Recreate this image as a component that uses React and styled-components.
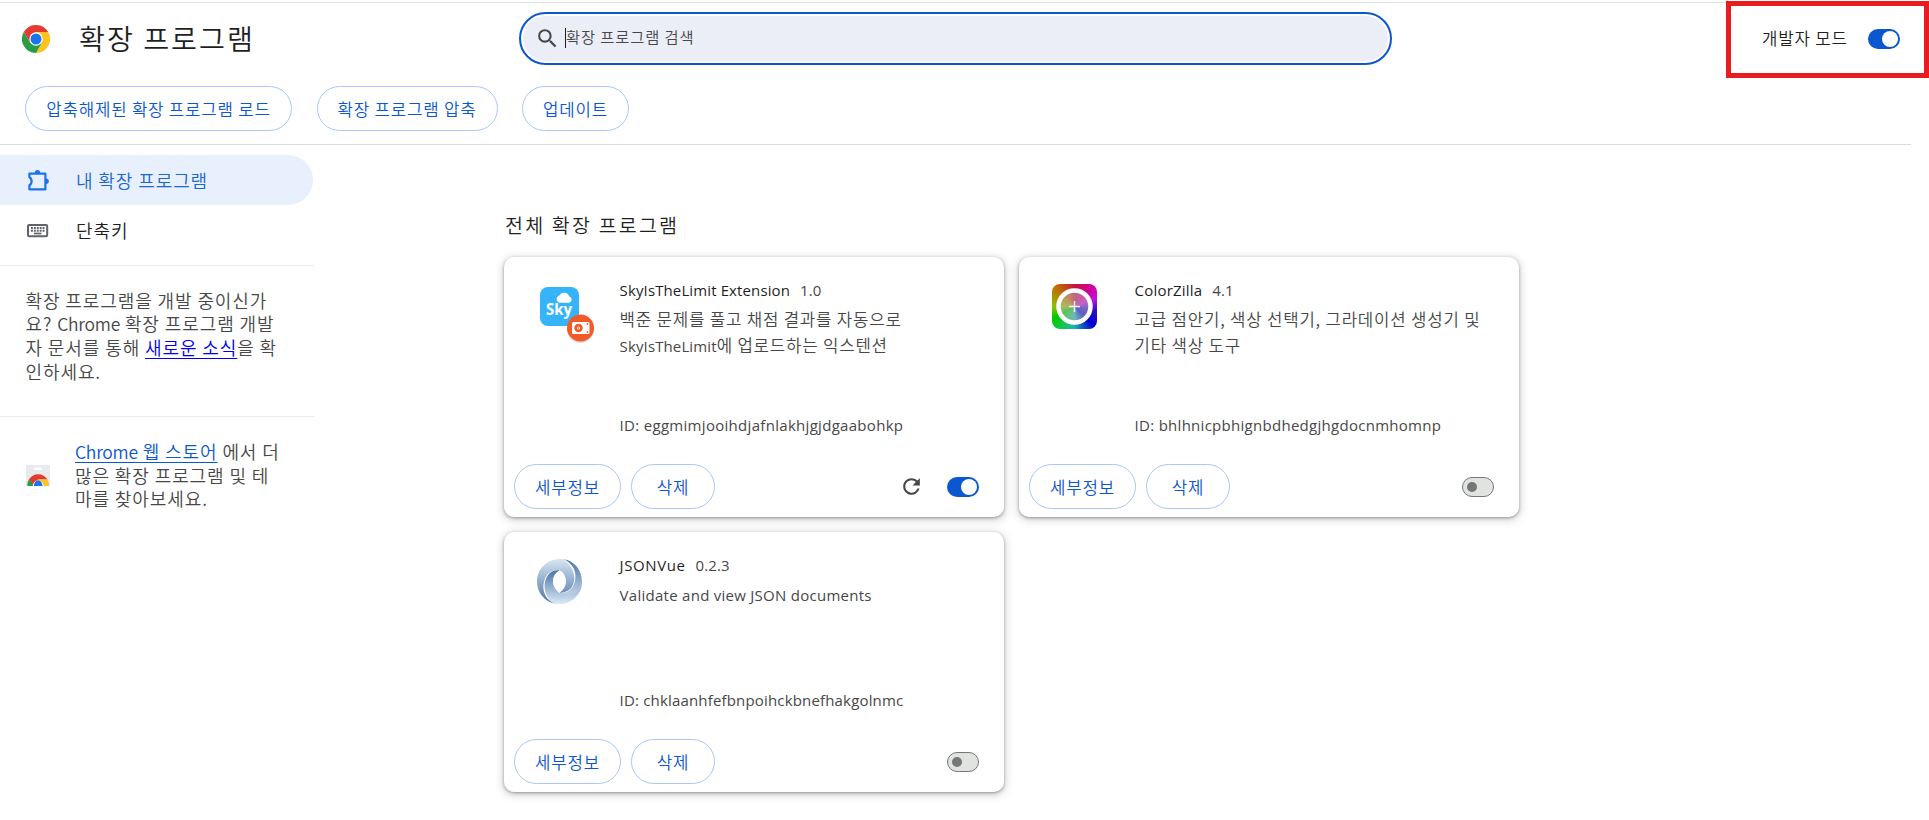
import React, { useId } from "react";
import styled, { createGlobalStyle } from "styled-components";

const Global = createGlobalStyle`
  * { box-sizing: border-box; }
  body {
    margin: 0;
    background: #fff;
    overflow: hidden;
    font-family: "Noto Sans CJK KR", sans-serif;
    font-weight: 350;
    color: #1f1f1f;
  }
`;

const Page = styled.div`
  position: relative;
  width: 1929px;
  height: 820px;
  padding-top: 2px;
  overflow: hidden;
`;

const Header = styled.header`
  width: 1911px;
  height: 143px;
  border-bottom: 1px solid #dadce0;
`;

const TopLine = styled.div`
  width: 1929px;
  height: 1px;
  background: #e0e0e0;
`;

const TopRow = styled.div`
  display: flex;
  align-items: center;
  height: 71px;
  padding-left: 22px;
`;

const Title = styled.h1`
  margin: 0 0 2px 29px;
  width: 440px;
  font-size: 28.2px;
  font-weight: inherit;
  line-height: 40px;
  letter-spacing: 2px;
`;

const Search = styled.div`
  display: flex;
  align-items: center;
  width: 873px;
  height: 53px;
  padding: 2px 14px;
  border: 2px solid #0b57d0;
  border-radius: 27px;
  background: #ebeef7;
  box-shadow: inset 0 0 0 2px #fff;
`;

const Caret = styled.span`
  width: 1px;
  height: 20px;
  margin: 0 0 1px 5px;
  background: #1f1f1f;
`;

const Placeholder = styled.span`
  font-size: 15.3px;
  line-height: 24px;
  letter-spacing: 0.9px;
  color: #474747;
  margin-bottom: 6px;
`;

const DevMode = styled.div`
  display: flex;
  align-items: center;
  margin-left: 370px;
  gap: 20px;
  font-size: 16.75px;
  letter-spacing: 0.8px;
  line-height: 24px;
  white-space: nowrap;
`;

const DevLabel = styled.span`
  width: 86px;
  padding-bottom: 2px;
`;

const Toolbar = styled.div`
  display: flex;
  gap: 24.5px;
  padding: 12px 25px;
`;

const PillButton = styled.button`
  width: ${(p) => p.$w}px;
  height: 45px;
  padding: 0;
  border: 1px solid #a8c7fa;
  border-radius: 23px;
  background: #fff;
  color: #0b57d0;
  font-family: inherit;
  font-weight: inherit;
  font-size: 16.75px;
  letter-spacing: 0.8px;
  white-space: nowrap;
`;

const Body = styled.div`
  display: flex;
`;

const Sidebar = styled.nav`
  width: 315px;
  padding-top: 10px;
`;

const NavItem = styled.div`
  display: flex;
  align-items: center;
  gap: 25px;
  width: 313px;
  height: 50px;
  padding-left: 26px;
  border-radius: 0 25px 25px 0;
  background: ${(p) => (p.$active ? "#e8f0fe" : "transparent")};
  color: ${(p) => (p.$active ? "#1967d2" : "#1f1f1f")};
  font-size: 18px;
  letter-spacing: 0.9px;
  white-space: nowrap;
`;

const Promo = styled.div`
  display: flex;
  align-items: center;
  gap: 25px;
  height: ${(p) => p.$h}px;
  margin-top: ${(p) => p.$mt || 0}px;
  padding: 0 0 ${(p) => p.$pb || 0}px ${(p) => p.$pl}px;
  border-top: 1px solid #ededed;
  color: #474747;
  font-size: 18px;
  letter-spacing: 0.9px;
  line-height: 23.6px;
  white-space: nowrap;
`;

const Link = styled.a`
  color: ${(p) => p.$color};
  text-decoration: underline;
  text-underline-offset: 3px;
`;

const Tight = styled.span`
  font-size: 17.5px;
  letter-spacing: -0.25px;
`;

const Main = styled.main`
  padding: 62px 0 0 189px;
`;

const SectionTitle = styled.h2`
  margin: 0 0 14px 1px;
  font-size: 19.5px;
  font-weight: inherit;
  letter-spacing: 2.2px;
  line-height: 36px;
`;

const Grid = styled.div`
  display: grid;
  grid-template-columns: 500px 500px;
  gap: 15px;
`;

const Card = styled.article`
  display: flex;
  flex-direction: column;
  justify-content: space-between;
  height: 260px;
  border-radius: 10px;
  background: #fff;
  box-shadow: 0 1px 3px rgba(60, 64, 67, 0.45), 0 2px 8px 1px rgba(60, 64, 67, 0.24);
`;

const CardInfo = styled.div`
  display: flex;
  padding: 21px 0 0 33px;
`;

const IconSlot = styled.div`
  width: 82.6px;
  padding-top: 6px;
`;

const Details = styled.div`
  display: flex;
  flex-direction: column;
  height: 162px;
  color: #474747;
  font-size: 16.75px;
  letter-spacing: 0.8px;
  white-space: nowrap;
`;

const Latin = styled.span`
  font-family: "Open Sans", sans-serif;
  font-weight: 400;
  font-size: 15px;
  letter-spacing: ${(p) => p.$ls ?? 0.12}px;
`;

const NameRow = styled.div`
  display: flex;
  gap: 10px;
  height: 24px;
  line-height: 24px;
`;

const Name = styled(Latin)`
  color: #1f1f1f;
`;

const Description = styled.div`
  margin-top: 5px;
  line-height: 25.5px;
  flex: 1;
`;

const IdLine = styled.div`
  line-height: 24px;
  height: 28px;
`;

const Actions = styled.div`
  display: flex;
  align-items: center;
  gap: 10px;
  padding: 0 25px 8px 10px;
`;

const Controls = styled.div`
  display: flex;
  align-items: center;
  gap: 23px;
  margin-left: auto;
`;

const Track = styled.span`
  display: flex;
  align-items: center;
  justify-content: ${(p) => (p.$on ? "flex-end" : "flex-start")};
  width: 32px;
  height: 20px;
  padding: 0 ${(p) => (p.$on ? 2 : 4)}px;
  border-radius: 10px;
  border: ${(p) => (p.$on ? "0" : "1px solid #747775")};
  background: ${(p) => (p.$on ? "#0b57d0" : "#e1e3e1")};
`;

const Knob = styled.span`
  width: ${(p) => (p.$on ? 16 : 10)}px;
  height: ${(p) => (p.$on ? 16 : 10)}px;
  border-radius: 50%;
  background: ${(p) => (p.$on ? "#fff" : "#747775")};
`;

const Highlight = styled.div`
  position: absolute;
  left: 1726px;
  top: 1px;
  width: 203px;
  height: 77px;
  border: 5px solid #e81c1c;
`;

const ZillaTile = styled.div`
  display: flex;
  width: 45px;
  height: 45px;
  border-radius: 8px;
  background: conic-gradient(from 0deg, #c4143c, #d000a0 45deg, #c010e0 70deg, #3010c0 100deg, #0000d0 135deg, #20b0b8 180deg, #10c840 215deg, #00c800 240deg, #90c000 270deg, #c07000 315deg, #c4143c);
`;

function Toggle({ on }) {
  return <Track $on={on}><Knob $on={on} /></Track>;
}

function ChromeLogo() {
  return (
    <svg width="28" height="28" viewBox="0 0 48 48">
      <path d="M3.2 12A24 24 0 0 1 44.8 12H24L13.6 30Z" fill="#e33b2e" />
      <path d="M44.8 12A24 24 0 0 1 24 48L34.4 30L24 12Z" fill="#fcc31e" />
      <path d="M3.2 12A24 24 0 0 0 24 48L34.4 30H13.6Z" fill="#2a9c48" />
      <circle cx="24" cy="24" r="11.500" fill="#fff" />
      <circle cx="24" cy="24" r="9.4" fill="#1a73e8" />
    </svg>
  );
}

function SearchIcon() {
  return (
    <svg width="25" height="25" viewBox="0 0 24 24" fill="#474747">
      <path d="M15.5 14h-.79l-.28-.27A6.47 6.47 0 0 0 16 9.5 6.5 6.5 0 1 0 9.5 16c1.61 0 3.09-.59 4.23-1.57l.27.28v.79l5 4.99L20.49 19l-4.99-5zm-6 0C7.01 14 5 11.99 5 9.5S7.01 5 9.5 5 14 7.01 14 9.5 11.99 14 9.5 14z" />
    </svg>
  );
}

function PuzzleIcon() {
  return (
    <svg width="25" height="25" viewBox="0 0 25 25" fill="none" stroke="#1a73e8" strokeWidth="2.2" strokeLinejoin="round">
      <path d="M3.400 5.600H19.400V21.300H3.400V17.300C6.300 15.800 6.300 10.800 3.400 9.300Z" />
      <path d="M8.800 5A2.700 2.900 0 0 1 14.200 5ZM20 10.500A2.800 2.700 0 0 1 20 16Z" fill="#1a73e8" stroke="none" />
    </svg>
  );
}

function KeyboardIcon() {
  return (
    <svg width="25" height="25" viewBox="0 0 25 25">
      <rect x="2" y="7" width="19.200" height="11.200" rx="1.200" fill="none" stroke="#5f6368" strokeWidth="2" />
      <path d="M5 10H18.500M5 12.800H18.500" stroke="#5f6368" strokeWidth="2" strokeDasharray="1.900 1" />
      <path d="M8 15.500H15.500" stroke="#5f6368" strokeWidth="1.700" />
    </svg>
  );
}

function StoreIcon() {
  return (
    <svg width="24" height="21" viewBox="0 0 24 21">
      <path d="M0 0H24V21H0Z" fill="#e8eaed" />
      <rect x="8" y="2.500" width="8" height="2.400" rx="1.200" fill="#fff" />
      <path d="M2.800 14.600A10.800 10.800 0 0 1 21.500 14.600H12L7.500 21Z" fill="#e33b2e" />
      <path d="M2.800 14.600A10.800 10.800 0 0 0 1.400 21H8.500Z" fill="#2a9c48" />
      <path d="M12 14.600H21.500A10.800 10.800 0 0 1 22.900 21H14Z" fill="#fcc31e" />
      <path d="M6.800 21A5.400 5.800 0 0 1 17.600 21Z" fill="#fff" />
      <path d="M7.900 21A4.300 5.700 0 0 1 16.500 21Z" fill="#1a73e8" />
    </svg>
  );
}

function ReloadIcon() {
  return (
    <svg width="25" height="25" viewBox="0 0 24 24" fill="#474747">
      <path d="M17.65 6.35A7.96 7.96 0 0 0 12 4a8 8 0 1 0 7.73 10h-2.08A6 6 0 1 1 12 6c1.66 0 3.14.69 4.22 1.78L13 11h7V4l-2.35 2.35z" />
    </svg>
  );
}

function SkyIcon() {
  return (
    <svg width="62" height="62" viewBox="0 0 62 62">
      <rect x="3" y="3" width="39" height="39" rx="8" fill="#36b4fa" />
      <path d="M22 18.800a3.800 3.800 0 0 1 .3-7.200a5.400 5.400 0 0 1 9.800 .6a3.500 3.500 0 0 1 .4 6.600Z" fill="#fff" />
      <text x="9" y="31" fill="#fff" fontFamily="Open Sans" fontWeight="700" fontSize="16" textLength="26" lengthAdjust="spacingAndGlyphs">Sky</text>
      <circle cx="43.500" cy="45.500" r="13.500" fill="#000" opacity=".13" />
      <circle cx="43.500" cy="44" r="13.500" fill="#f15a29" />
      <rect x="35" y="38" width="17.500" height="12" rx="1.500" fill="#fff" />
      <circle cx="41.500" cy="44" r="4.200" fill="#f15a29" />
      <circle cx="41.500" cy="44" r="1.500" fill="#fff" />
      <circle cx="41.500" cy="44" r=".7" fill="#f15a29" />
      <circle cx="50.500" cy="40" r=".9" fill="#f15a29" />
      <circle cx="50.500" cy="48" r=".9" fill="#f15a29" />
    </svg>
  );
}

function ZillaIcon() {
  return (
    <ZillaTile>
      <svg width="45" height="45" viewBox="0 0 45 45">
        <circle cx="22.500" cy="22.500" r="16" fill="#bbb" fillOpacity=".5" stroke="#fff" strokeWidth="4.500" />
        <path d="M17 22.500H28M22.500 17V28" stroke="#fff" strokeWidth="1.500" opacity=".9" />
      </svg>
    </ZillaTile>
  );
}

function JsonIcon() {
  const id = useId();
  return (
    <svg width="45" height="45" viewBox="0 0 160 160">
      <defs>
        <linearGradient id={id + "a"} x1="0" y1="0" x2="0" y2="1">
          <stop offset="0" stopColor="#d8e6f2" /><stop offset="1" stopColor="#4a74a6" />
        </linearGradient>
        <linearGradient id={id + "b"} x1="0" y1="0" x2="0" y2="1">
          <stop offset="0" stopColor="#4a74a6" /><stop offset="1" stopColor="#dcebf6" />
        </linearGradient>
      </defs>
      <path fill={`url(#${id}b)`} d="M94 1C127 14 144 46 134 83C126 111 104 124 79.900 119.100C79.900 119.100 95 133 62 158C68 160 74 160 80 160C124 160 160 124 160 80C160 38 130 5 94 1Z" />
      <path fill={`url(#${id}a)`} d="M66 159C32 148 15 114 26 77C35 47 60 35 80 41C104 49 111 92 80 120C136 123 158 50 94 1C88 0 84 0 79 0C34 1 0 36 0 80C0 123 31 154 66 159Z" />
      <path fill={`url(#${id}b)`} d="M80 41C42 34 14 80 34 128C41 144 51 154 66 159C75 160 84 160 92 159C128 153 157 125 160 84C157 115 128 135 80 120C48 94 52 55 80 41Z" />
      <path fill="#fff" d="M80 41C49 61 49 98 80 120C111 98 111 61 80 41Z" />
    </svg>
  );
}

const extensions = [
  {
    name: "SkyIsTheLimit Extension", version: "1.0", icon: <SkyIcon />, on: true, reload: true,
    description: <>백준 문제를 풀고 채점 결과를 자동으로<br /><Latin>SkyIsTheLimit</Latin>에 업로드하는 익스텐션</>,
    id: "eggmimjooihdjafnlakhjgjdgaabohkp",
    idSpacing: 0.3,
  },
  {
    name: "ColorZilla", version: "4.1", icon: <ZillaIcon />, nameSpacing: 0.2,
    description: <>고급 점안기, 색상 선택기, 그라데이션 생성기 및<br />기타 색상 도구</>,
    id: "bhlhnicpbhignbdhedgjhgdocnmhomnp",
    idSpacing: 0.28,
  },
  {
    name: "JSONVue", version: "0.2.3", icon: <JsonIcon />, nameSpacing: 0.6,
    description: <Latin $ls={0.27}>Validate and view JSON documents</Latin>,
    id: "chklaanhfefbnpoihckbnefhakgolnmc",
    idSpacing: 0.17,
  },
];

function ExtensionCard({ item }) {
  return (
    <Card>
      <CardInfo>
        <IconSlot>{item.icon}</IconSlot>
        <Details>
          <NameRow><Name $ls={item.nameSpacing}>{item.name}</Name><Latin>{item.version}</Latin></NameRow>
          <Description>{item.description}</Description>
          <IdLine><Latin $ls={item.idSpacing}>ID: {item.id}</Latin></IdLine>
        </Details>
      </CardInfo>
      <Actions>
        <PillButton $w={107}>세부정보</PillButton>
        <PillButton $w={84}>삭제</PillButton>
        <Controls>
          {item.reload && <ReloadIcon />}
          <Toggle on={item.on} />
        </Controls>
      </Actions>
    </Card>
  );
}

export default function App() {
  return (
    <Page>
      <Global />
      <Header>
        <TopLine />
        <TopRow>
          <ChromeLogo />
          <Title>확장 프로그램</Title>
          <Search>
            <SearchIcon />
            <Caret />
            <Placeholder>확장 프로그램 검색</Placeholder>
          </Search>
          <DevMode><DevLabel>개발자 모드</DevLabel><Toggle on /></DevMode>
        </TopRow>
        <Toolbar>
          <PillButton $w={267}>압축해제된 확장 프로그램 로드</PillButton>
          <PillButton $w={181}>확장 프로그램 압축</PillButton>
          <PillButton $w={107}>업데이트</PillButton>
        </Toolbar>
      </Header>
      <Body>
        <Sidebar>
          <NavItem $active><PuzzleIcon />내 확장 프로그램</NavItem>
          <NavItem><KeyboardIcon />단축키</NavItem>
          <Promo $h={151} $mt={10} $pb={10} $pl={25.5}>
            <div>
              확장 프로그램을 개발 중이신가<br />
              요? <Tight>Chrome</Tight> 확장 프로그램 개발<br />
              자 문서를 통해 <Link $color="#0000ee">새로운 소식</Link>을 확<br />
              인하세요.
            </div>
          </Promo>
          <Promo $h={118} $pl={26}>
            <StoreIcon />
            <div>
              <Link $color="#0b57d0"><Tight>Chrome</Tight> 웹 스토어</Link> 에서 더<br />
              많은 확장 프로그램 및 테<br />
              마를 찾아보세요.
            </div>
          </Promo>
        </Sidebar>
        <Main>
          <SectionTitle>전체 확장 프로그램</SectionTitle>
          <Grid>
            {extensions.map((item) => <ExtensionCard key={item.id} item={item} />)}
          </Grid>
        </Main>
      </Body>
      <Highlight />
    </Page>
  );
}
